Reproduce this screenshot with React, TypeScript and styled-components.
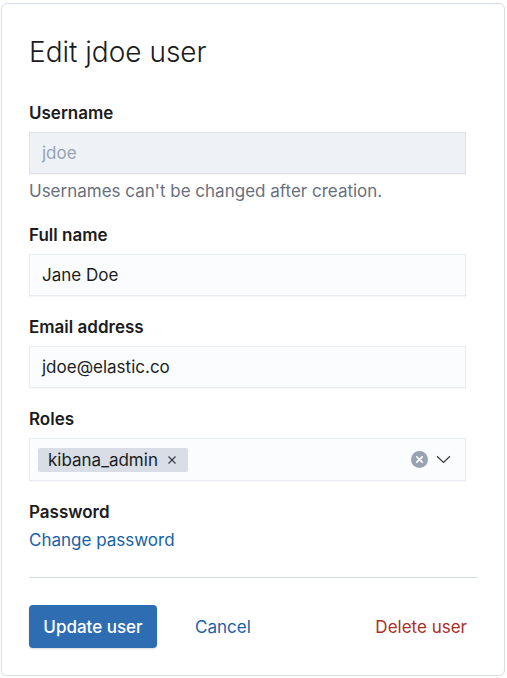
import React from "react";
import styled, { createGlobalStyle } from "styled-components";

const Global = createGlobalStyle`
  html, body { margin: 0; padding: 0; background: #ffffff; }
  body { font-family: Inter, "Noto Sans", sans-serif; color: #1a1c21; -webkit-font-smoothing: antialiased; }
  * { box-sizing: border-box; }
`;

const Card = styled.div`
  margin: 3px 0 0 1px;
  width: 504px;
  height: 673px;
  border: 1px solid #d9dfe8;
  border-radius: 6px;
  background: #fff;
  box-shadow: 0 1px 2px rgba(0, 0, 0, 0.04);
  padding: 31px 27px 0 27px;
  display: flex;
  flex-direction: column;
`;

const Title = styled.h1`
  margin: 0 0 34px 0;
  font-size: 28px;
  line-height: 34px;
  font-weight: 300;
  color: #1a1c21;
`;

const Field = styled.div<{ $gap?: number }>`
  display: flex;
  flex-direction: column;
  margin-bottom: ${(p) => p.$gap ?? 21}px;
`;

const Label = styled.label<{ $tight?: boolean }>`
  font-size: 17px;
  line-height: 21px;
  font-weight: 600;
  color: #1a1c21;
  margin-bottom: ${(p) => (p.$tight ? 0 : 8)}px;
`;

const Input = styled.div<{ $disabled?: boolean }>`
  width: 437px;
  height: 42px;
  display: flex;
  align-items: center;
  padding: 0 12px;
  font-size: 17px;
  color: ${(p) => (p.$disabled ? "#98a2b3" : "#1a1c21")};
  background: ${(p) => (p.$disabled ? "#eef2f7" : "#fbfcfd")};
  border: 1px solid ${(p) => (p.$disabled ? "#dde2ea" : "#e8ecf2")};
  box-shadow: 0 1px 1px rgba(0, 0, 0, 0.03);
`;

const Help = styled.div`
  margin-top: 7px;
  font-size: 17px;
  line-height: 21px;
  color: #69707d;
`;

const Combo = styled(Input)`
  padding: 0 14px 0 8px;
  height: 43px;
  gap: 8px;
`;

const Badge = styled.span`
  display: inline-flex;
  align-items: center;
  height: 24px;
  padding: 0 11px 0 10px;
  gap: 9px;
  background: #d8dde6;
  border-radius: 2px;
  font-size: 17px;
  color: #1a1c21;
`;

const Spacer = styled.span`
  flex: 1;
`;

const Link = styled.a`
  margin-top: 7px;
  font-size: 17px;
  line-height: 21px;
  color: #1661a6;
  text-decoration: none;
`;

const Divider = styled.hr`
  margin: 26px 0 27px 0;
  border: none;
  border-top: 1px solid #d3dae6;
  width: 448px;
`;

const Actions = styled.div`
  display: flex;
  align-items: center;
  width: 448px;
`;

const PrimaryButton = styled.button`
  height: 43px;
  width: 128px;
  border: none;
  border-radius: 4px;
  background: #2f6db3;
  color: #fff;
  font-family: inherit;
  font-size: 17px;
  font-weight: 500;
  box-shadow: 0 1px 2px rgba(0, 0, 0, 0.15);
`;

const EmptyButton = styled.button<{ $color: string }>`
  height: 43px;
  border: none;
  background: transparent;
  font-family: inherit;
  font-size: 17px;
  color: ${(p) => p.$color};
  padding: 0 10px;
`;

const CancelButton = styled(EmptyButton)`
  margin-left: 28px;
`;

const ClearIcon = () => (
  <svg width="17" height="17" viewBox="0 0 17 17">
    <circle cx="8.5" cy="8.5" r="8.5" fill="#98a2b3" />
    <path d="M5.8 5.8 L11.2 11.2 M11.2 5.8 L5.8 11.2" stroke="#fff" strokeWidth="1.8" strokeLinecap="round" />
  </svg>
);

const Chevron = () => (
  <svg width="15" height="9" viewBox="0 0 15 9">
    <path d="M1 1.2 L7.5 7.5 L14 1.2" fill="none" stroke="#343741" strokeWidth="1.2" />
  </svg>
);

const SmallX = () => (
  <svg width="10" height="10" viewBox="0 0 10 10">
    <path d="M1.5 1.5 L8.5 8.5 M8.5 1.5 L1.5 8.5" stroke="#343741" strokeWidth="1.1" />
  </svg>
);

export default function App() {
  return (
    <>
      <Global />
      <Card>
        <Title>Edit jdoe user</Title>
        <Field $gap={23}>
          <Label>Username</Label>
          <Input $disabled>jdoe</Input>
          <Help>Usernames can't be changed after creation.</Help>
        </Field>
        <Field>
          <Label>Full name</Label>
          <Input>Jane Doe</Input>
        </Field>
        <Field>
          <Label>Email address</Label>
          <Input>jdoe@elastic.co</Input>
        </Field>
        <Field>
          <Label>Roles</Label>
          <Combo>
            <Badge>
              kibana_admin
              <SmallX />
            </Badge>
            <Spacer />
            <ClearIcon />
            <Chevron />
          </Combo>
        </Field>
        <Field $gap={0}>
          <Label $tight>Password</Label>
          <Link href="#">Change password</Link>
        </Field>
        <Divider />
        <Actions>
          <PrimaryButton>Update user</PrimaryButton>
          <CancelButton $color="#1661a6">Cancel</CancelButton>
          <Spacer />
          <EmptyButton $color="#a8302a">Delete user</EmptyButton>
        </Actions>
      </Card>
    </>
  );
}
